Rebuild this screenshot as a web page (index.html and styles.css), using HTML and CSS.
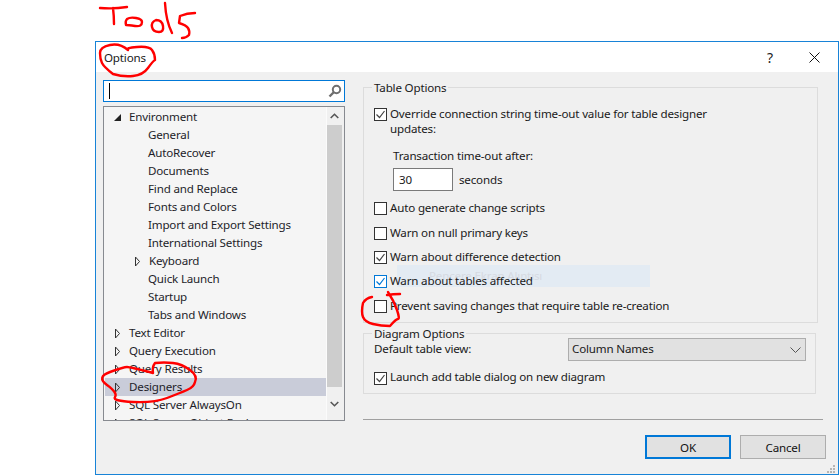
FILE: index.html
```html
<!DOCTYPE html>
<html lang="en">
<head>
<meta charset="utf-8">
<title>Options</title>
<link rel="stylesheet" href="styles.css">
</head>
<body>
<div class="dialog">
  <header class="titlebar">
    <span class="title">Options</span>
    <span class="help">?</span>
    <svg class="close" width="11" height="11" viewBox="0 0 11 11"><path d="M.5.5l10 10M10.5.5l-10 10" stroke="#111" fill="none"/></svg>
  </header>
  <div class="main">
    <div class="left">
      <div class="search">
        <span class="caret"></span>
        <svg width="14" height="14" viewBox="0 0 14 14"><circle cx="8.5" cy="5.5" r="3.7" fill="none" stroke="#6f6f6f" stroke-width="2"/><path d="M6 8l-4.500 4.500" stroke="#6f6f6f" stroke-width="2.400" fill="none"/></svg>
      </div>
      <div class="tree">
        <div class="list">
          <div class="node"><svg class="arrow" width="7" height="7" viewBox="0 0 7 7"><path d="M7 0v7H0z" fill="#222"/></svg>Environment</div>
          <div class="node child">General</div>
          <div class="node child">AutoRecover</div>
          <div class="node child">Documents</div>
          <div class="node child">Find and Replace</div>
          <div class="node child">Fonts and Colors</div>
          <div class="node child">Import and Export Settings</div>
          <div class="node child">International Settings</div>
          <div class="node branch"><svg class="arrow" width="7" height="11" viewBox="0 0 7 11"><path d="M1.500 1l4 4.500-4 4.500z" fill="none" stroke="#333"/></svg>Keyboard</div>
          <div class="node child">Quick Launch</div>
          <div class="node child">Startup</div>
          <div class="node child">Tabs and Windows</div>
          <div class="node"><svg class="arrow" width="7" height="11" viewBox="0 0 7 11"><path d="M1.500 1l4 4.500-4 4.500z" fill="none" stroke="#333"/></svg>Text Editor</div>
          <div class="node"><svg class="arrow" width="7" height="11" viewBox="0 0 7 11"><path d="M1.500 1l4 4.500-4 4.500z" fill="none" stroke="#333"/></svg>Query Execution</div>
          <div class="node"><svg class="arrow" width="7" height="11" viewBox="0 0 7 11"><path d="M1.500 1l4 4.500-4 4.500z" fill="none" stroke="#333"/></svg>Query Results</div>
          <div class="node selected"><svg class="arrow" width="7" height="11" viewBox="0 0 7 11"><path d="M1.500 1l4 4.500-4 4.500z" fill="none" stroke="#333"/></svg>Designers</div>
          <div class="node"><svg class="arrow" width="7" height="11" viewBox="0 0 7 11"><path d="M1.500 1l4 4.500-4 4.500z" fill="none" stroke="#333"/></svg>SQL Server AlwaysOn</div>
          <div class="node"><svg class="arrow" width="7" height="11" viewBox="0 0 7 11"><path d="M1.500 1l4 4.500-4 4.500z" fill="none" stroke="#333"/></svg>SQL Server Object Explorer</div>
        </div>
        <div class="scrollbar">
          <div class="scroll-btn"><svg width="9" height="6" viewBox="0 0 9 6"><path d="M.7 5L4.500 1.300 8.300 5" fill="none" stroke="#555" stroke-width="1.600"/></svg></div>
          <div class="thumb"></div>
          <div class="scroll-btn down"><svg width="9" height="6" viewBox="0 0 9 6"><path d="M.7 1L4.500 4.700 8.300 1" fill="none" stroke="#555" stroke-width="1.600"/></svg></div>
        </div>
      </div>
    </div>
    <div class="right">
      <section class="group table-options">
        <div class="watermark">Pencere Ekran Alıntısı</div>
        <div class="legend">Table Options</div>
        <label class="check first"><span class="box"><svg width="11" height="11" viewBox="0 0 11 11"><path d="M1.500 5.500l3 3 5-6.500" fill="none" stroke="#444" stroke-width="1.200"/></svg></span><span class="wrap">Override connection string time-out value for table designer updates:</span></label>
        <div class="timeout">
          <div class="timeout-label">Transaction time-out after:</div>
          <div class="timeout-row"><span class="input">30</span><span>seconds</span></div>
        </div>
        <label class="check row"><span class="box"></span><span class="label">Auto generate change scripts</span></label>
        <label class="check row spaced"><span class="box"></span><span class="label">Warn on null primary keys</span></label>
        <label class="check row"><span class="box"><svg width="11" height="11" viewBox="0 0 11 11"><path d="M1.500 5.500l3 3 5-6.500" fill="none" stroke="#444" stroke-width="1.200"/></svg></span><span class="label">Warn about difference detection</span></label>
        <label class="check row"><span class="box hover"><svg width="11" height="11" viewBox="0 0 11 11"><path d="M1.500 5.500l3 3 5-6.500" fill="none" stroke="#0078d7" stroke-width="1.200"/></svg></span><span class="label">Warn about tables affected</span></label>
        <label class="check row spaced"><span class="box"></span><span class="label">Prevent saving changes that require table re-creation</span></label>
      </section>
      <section class="group diagram-options">
        <div class="legend">Diagram Options</div>
        <div class="combo-row">
          <span class="label">Default table view:</span>
          <div class="combo"><span class="label">Column Names</span><svg width="11" height="6" viewBox="0 0 11 6"><path d="M.5.500l5 5 5-5" fill="none" stroke="#555"/></svg></div>
        </div>
        <label class="check row launch"><span class="box"><svg width="11" height="11" viewBox="0 0 11 11"><path d="M1.500 5.500l3 3 5-6.500" fill="none" stroke="#444" stroke-width="1.200"/></svg></span><span class="label">Launch add table dialog on new diagram</span></label>
      </section>
      <div class="separator"></div>
      <div class="buttons">
        <button class="btn default">OK</button>
        <button class="btn">Cancel</button>
      </div>
    </div>
  </div>
  <svg class="grip" width="9" height="9" viewBox="0 0 9 9"><path d="M6 0h2v2H6zM3 3h2v2H3zM6 3h2v2H6zM0 6h2v2H0zM3 6h2v2H3zM6 6h2v2H6z" fill="#b5b5b5"/></svg>
</div>
<svg class="ink" width="839" height="475" viewBox="0 0 839 475" fill="none" stroke="#f00" stroke-width="2.400" stroke-linecap="round" stroke-linejoin="round">
  <path d="M100 8q14 1 27-1M113 8q1 8 1 16"/>
  <path d="M127 19q3-2 9-1t6 4q0 5-7 4t-9-1q-1-4 1-6z"/>
  <path d="M156 20q6 0 7 6t-4 6q-6 0-7-5t4-7z"/>
  <path d="M165 3q1 18 7 30"/>
  <path d="M195 13q-8 0-15 3l-1 7q7 2 9 5t1 7q-3 3-7 3"/>
  <path d="M128 50q-8-7-18-5t-10 8q0 6 2 10t11 11q10 3 20 2t15-8 7-8q0-6-3-10t-15-3-9 3z"/>
  <path d="M153 373q-1-6 2-10 9-1 18 0t17 7 5 12q-1 5-8 8t-20 8-34 4-18-5-8-12 3-13 17-5 26 6z"/>
  <path d="M387 295q6-1 13-1M388 292q6 9 9 18t1 9-8 7q-9 0-17-2t-10-7 0-14q3-5 9-6"/>
</svg>
</body>
</html>
```
FILE: styles.css
```css
* { box-sizing: border-box; }

html, body { margin: 0; padding: 0; }

body {
  width: 839px;
  height: 475px;
  overflow: hidden;
  background: #fff;
  padding: 41px 0 0 95px;
  font-family: "Noto Sans", "Open Sans", sans-serif;
  font-size: 11.6px;
  letter-spacing: -0.18px;
  color: #1a1a1a;
  position: relative;
}

.dialog {
  width: 744px;
  height: 434px;
  border: 1px solid #1883d7;
  background: #f0f0f0;
  position: relative;
}

.titlebar {
  height: 30px;
  background: #fff;
  display: flex;
  align-items: center;
  padding: 0 18px 0 8px;
}

.title { flex: 1; }
.help { font-size: 14px; margin-right: 36px; color: #222; }

.main {
  display: flex;
  padding: 8px 0 0 7px;
}

.left { width: 242px; }

.search {
  height: 22px;
  border: 1px solid #0078d7;
  background: #fff;
  display: flex;
  align-items: center;
  justify-content: space-between;
  padding: 0 2px 0 5px;
}

.caret { width: 1px; height: 16px; background: #000; }

.tree {
  height: 315px;
  margin-top: 4px;
  border: 1px solid #878a90;
  background: #f5f5f5;
  display: flex;
}

.list {
  flex: 1;
  padding: 1px 0 0 1px;
  overflow: hidden;
  min-width: 0;
}

.node {
  height: 18px;
  line-height: 18px;
  padding-left: 9px;
  display: flex;
  align-items: center;
  white-space: nowrap;
  color: #1e1e2a;
}

.node.child { padding-left: 43px; }
.node.branch { padding-left: 29px; }
.node.selected { background: #c9ccd9; }
.arrow { margin-right: 8px; flex: none; }

.scrollbar {
  width: 18px;
  display: flex;
  flex-direction: column;
  background: #f0f0f0;
  padding-right: 2px;
  border-left: 1px solid #fbfbfb;
}

.scroll-btn {
  height: 18px;
  flex: none;
  display: flex;
  align-items: center;
  justify-content: center;
}

.scroll-btn.down { margin-top: auto; height: 32px; }
.thumb { height: 262px; background: #cdcdcd; flex: none; }

.right {
  width: 463px;
  margin-left: 18px;
  padding-top: 7px;
}

.group {
  border: 1px solid #dcdcdc;
  padding: 0 9px 0 10px;
  position: relative;
}

.table-options { width: 455px; height: 236px; }
.diagram-options { width: 453px; height: 61px; margin-top: 10px; }

.legend {
  width: fit-content;
  height: 16px;
  line-height: 16px;
  margin: -8px 0 -1px -2px;
  padding: 0 2px;
  background: #f0f0f0;
  position: relative;
}

.watermark {
  position: absolute;
  left: 33px;
  top: 177px;
  width: 253px;
  height: 22px;
  line-height: 22px;
  padding-left: 32px;
  background: #e3ebf3;
  color: #d6dae2;
}

.check {
  display: flex;
  align-items: center;
  position: relative;
  white-space: nowrap;
}

.check.first {
  align-items: flex-start;
  margin-top: 11px;
  line-height: 15px;
}

.check.first .box { margin-top: 2px; }
.wrap { white-space: normal; width: 340px; }

.label { line-height: 14px; margin-bottom: 1px; }
.launch .label { margin-bottom: 3px; }

.box {
  width: 13px;
  height: 13px;
  flex: none;
  margin-right: 3px;
  border: 1px solid #333;
  background: #fff;
  display: flex;
  align-items: center;
  justify-content: center;
}

.box.hover { border-color: #0078d7; }

.timeout {
  margin: 12px 0 0 19px;
  position: relative;
}

.timeout-label { line-height: 15px; }

.timeout-row {
  margin-top: 5px;
  display: flex;
  align-items: center;
  gap: 6px;
}

.input {
  width: 60px;
  height: 23px;
  line-height: 21px;
  border: 1px solid #7a7a7a;
  background: #fff;
  padding-left: 5px;
}

.row { height: 24px; }
.table-options .timeout + .row { margin-top: 5px; }
.row.spaced { margin-top: 1px; }

.combo-row {
  display: flex;
  align-items: center;
  justify-content: space-between;
  height: 23px;
  margin-top: -4px;
  position: relative;
}

.combo {
  width: 238px;
  height: 23px;
  border: 1px solid #adadad;
  background: #e1e1e1;
  display: flex;
  align-items: center;
  justify-content: space-between;
  padding: 0 4px 0 3px;
}

.row.launch { margin-top: 5px; }

.separator {
  width: 460px;
  height: 1px;
  margin-top: 25px;
  background: #a0a0a0;
}

.buttons {
  display: flex;
  justify-content: flex-end;
  gap: 9px;
  margin-top: 15px;
}

.btn {
  width: 86px;
  height: 24px;
  border: 1px solid #adadad;
  background: #e1e1e1;
  font: inherit;
  letter-spacing: inherit;
  color: #111;
  padding: 0;
}

.btn.default { border: 2px solid #0078d7; }

.grip {
  position: absolute;
  right: 2px;
  bottom: 0;
}

.ink {
  position: absolute;
  left: 0;
  top: 0;
}
```
